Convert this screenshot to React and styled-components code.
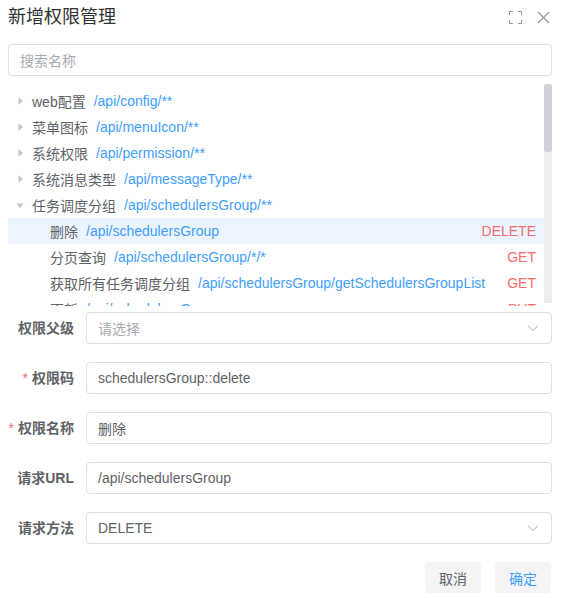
import React from "react";
import styled, { createGlobalStyle } from "styled-components";

const Global = createGlobalStyle`
  html, body { margin: 0; padding: 0; background: #fff; }
  body {
    font-family: "Liberation Sans", "Noto Sans CJK SC", sans-serif;
    font-size: 14px;
    color: #606266;
  }
  * { box-sizing: border-box; }
`;

const Dialog = styled.div`
  width: 544px;
  margin-left: 8px;
  display: flex;
  flex-direction: column;
`;

const Header = styled.div`
  height: 34px;
  display: flex;
  align-items: center;
  justify-content: space-between;
`;

const Title = styled.div`
  font-size: 18px;
  color: #303133;
  line-height: 24px;
  padding-bottom: 1px;
`;

const HeaderIcons = styled.div`
  display: flex;
  align-items: center;
  gap: 15px;
  margin-right: 2px;
  color: #909399;
  svg { display: block; }
`;

const SearchBox = styled.div`
  margin-top: 10px;
  height: 32px;
  border: 1px solid #dcdfe6;
  border-radius: 4px;
  display: flex;
  align-items: center;
  padding: 0 11px;
  color: #a8abb2;
`;

const TreeWrap = styled.div`
  margin-top: 8px;
  height: 222px;
  display: flex;
`;

const TreeList = styled.div`
  flex: 1;
  min-width: 0;
  overflow: hidden;
  padding-top: 4px;
`;

const ScrollTrack = styled.div`
  width: 8px;
  height: 219px;
  flex: none;
  background: #ebedf0;
  display: flex;
  flex-direction: column;
`;

const ScrollThumb = styled.div`
  height: 68px;
  background: #cdd0d6;
  border-radius: 3px;
`;

const Row = styled.div`
  height: 26px;
  display: flex;
  align-items: center;
  padding-left: ${(p) => (p.$level - 1) * 18}px;
  padding-right: 8px;
  background: ${(p) => (p.$active ? "#ecf5ff" : "transparent")};
  white-space: nowrap;
`;

const Caret = styled.span`
  width: 24px;
  height: 24px;
  flex: none;
  display: flex;
  align-items: center;
  justify-content: center;
  color: #c0c4cc;
  svg { transform: rotate(${(p) => (p.$open ? 90 : 0)}deg); }
`;

const Label = styled.span`
  color: #606266;
`;

const Path = styled.span`
  color: #409eff;
  margin-left: 8px;
`;

const Method = styled.span`
  margin-left: auto;
  padding-left: 8px;
  color: #f56c6c;
`;

const Form = styled.div`
  margin-top: 6px;
  display: flex;
  flex-direction: column;
`;

const FormItem = styled.div`
  display: flex;
  margin-bottom: 18px;
`;

const FormLabel = styled.label`
  width: 78px;
  flex: none;
  padding-right: 12px;
  text-align: right;
  line-height: 32px;
  font-weight: 700;
  color: #606266;
  white-space: nowrap;
`;

const Star = styled.span`
  color: #f56c6c;
  margin-right: 4px;
  font-weight: 400;
`;

const Field = styled.div`
  flex: 1;
  height: 32px;
  border: 1px solid #dcdfe6;
  border-radius: 4px;
  display: flex;
  align-items: center;
  padding: 0 11px;
  color: ${(p) => (p.$placeholder ? "#a8abb2" : "#606266")};
`;

const Arrow = styled.span`
  margin-left: auto;
  color: #a8abb2;
  display: flex;
  svg { display: block; }
`;

const Footer = styled.div`
  display: flex;
  justify-content: flex-end;
  gap: 14px;
  padding-right: 1px;
`;

const Button = styled.button`
  width: 56px;
  height: 31px;
  border: none;
  border-radius: 4px;
  background: #f4f4f5;
  font-family: inherit;
  font-size: 14px;
  color: ${(p) => (p.$primary ? "#409eff" : "#606266")};
  padding: 0;
`;

const CaretIcon = () => (
  <svg width="12" height="12" viewBox="0 0 1024 1024">
    <path fill="currentColor" d="M384 192v640l384-320.064z" />
  </svg>
);

const Chevron = () => (
  <svg width="14" height="14" viewBox="0 0 1024 1024">
    <path
      fill="currentColor"
      d="M831.872 340.864 512 652.672 192.128 340.864a30.592 30.592 0 0 0-42.752 0 29.12 29.12 0 0 0 0 41.6L489.664 714.24a32 32 0 0 0 44.672 0l340.288-331.712a29.12 29.12 0 0 0 0-41.728 30.592 30.592 0 0 0-42.752 0z"
    />
  </svg>
);

const FullIcon = () => (
  <svg width="13" height="13" viewBox="0 0 13 13" fill="none" stroke="currentColor" strokeWidth="1">
    <path d="M0.5 4V0.5H4M9 0.5h3.5V4M12.5 9v3.5H9M4 12.5H0.5V9" />
  </svg>
);

const CloseIcon = () => (
  <svg width="13" height="13" viewBox="0 0 13 13" fill="none" stroke="currentColor" strokeWidth="1.1">
    <path d="M1 1l11 11M12 1L1 12" />
  </svg>
);

const rows = [
  { level: 1, label: "web配置", path: "/api/config/**" },
  { level: 1, label: "菜单图标", path: "/api/menuIcon/**" },
  { level: 1, label: "系统权限", path: "/api/permission/**" },
  { level: 1, label: "系统消息类型", path: "/api/messageType/**" },
  { level: 1, label: "任务调度分组", path: "/api/schedulersGroup/**", open: true },
  { level: 2, label: "删除", path: "/api/schedulersGroup", method: "DELETE", active: true },
  { level: 2, label: "分页查询", path: "/api/schedulersGroup/*/*", method: "GET" },
  { level: 2, label: "获取所有任务调度分组", path: "/api/schedulersGroup/getSchedulersGroupList", method: "GET" },
  { level: 2, label: "更新", path: "/api/schedulersGroup", method: "PUT" },
];

export default function App() {
  return (
    <>
      <Global />
      <Dialog>
        <Header>
          <Title>新增权限管理</Title>
          <HeaderIcons>
            <FullIcon />
            <CloseIcon />
          </HeaderIcons>
        </Header>
        <SearchBox>搜索名称</SearchBox>
        <TreeWrap>
          <TreeList>
            {rows.map((r, i) => (
              <Row key={i} $level={r.level} $active={r.active}>
                <Caret $open={r.open}>{r.level === 1 ? <CaretIcon /> : null}</Caret>
                <Label>{r.label}</Label>
                <Path>{r.path}</Path>
                {r.method ? <Method>{r.method}</Method> : null}
              </Row>
            ))}
          </TreeList>
          <ScrollTrack>
            <ScrollThumb />
          </ScrollTrack>
        </TreeWrap>
        <Form>
          <FormItem>
            <FormLabel>权限父级</FormLabel>
            <Field $placeholder>
              请选择
              <Arrow><Chevron /></Arrow>
            </Field>
          </FormItem>
          <FormItem>
            <FormLabel><Star>*</Star>权限码</FormLabel>
            <Field>schedulersGroup::delete</Field>
          </FormItem>
          <FormItem>
            <FormLabel><Star>*</Star>权限名称</FormLabel>
            <Field>删除</Field>
          </FormItem>
          <FormItem>
            <FormLabel>请求URL</FormLabel>
            <Field>/api/schedulersGroup</Field>
          </FormItem>
          <FormItem>
            <FormLabel>请求方法</FormLabel>
            <Field>
              DELETE
              <Arrow><Chevron /></Arrow>
            </Field>
          </FormItem>
          <Footer>
            <Button>取消</Button>
            <Button $primary>确定</Button>
          </Footer>
        </Form>
      </Dialog>
    </>
  );
}
